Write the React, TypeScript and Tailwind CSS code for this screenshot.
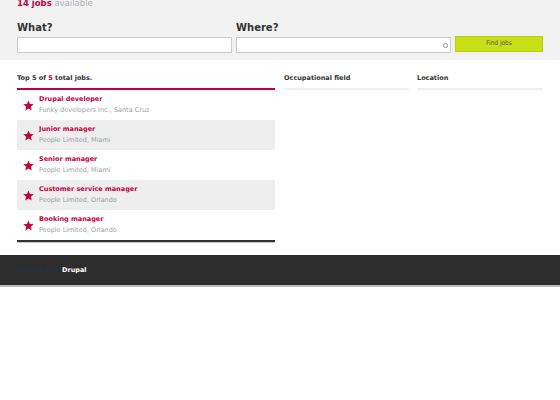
const JOBS = [
  { title: "Drupal developer", meta: "Funky developers Inc., Santa Cruz" },
  { title: "Junior manager", meta: "People Limited, Miami" },
  { title: "Senior manager", meta: "People Limited, Miami" },
  { title: "Customer service manager", meta: "People Limited, Orlando" },
  { title: "Booking manager", meta: "People Limited, Orlando" },
];

function Star() {
  return (
    <svg width="11" height="11" viewBox="0 0 24 24" className="fill-[#c4003c] shrink-0">
      <path d="M12 1l3.2 7.7 8.3.6-6.4 5.4 2 8.1L12 18.4l-7.1 4.4 2-8.1L.5 9.3l8.3-.6z" />
    </svg>
  );
}

export default function App() {
  return (
    <div className="w-[560px] h-[400px] overflow-hidden bg-white font-['DejaVu_Sans',sans-serif]">
      <div className="bg-[#f2f2f2] h-[60px] px-[17px] flex flex-col">
        <div className="-mt-[2px] h-[10px] text-[8.5px] leading-[10px] whitespace-nowrap">
          <span className="font-bold text-[#c4003c]">14 jobs</span>{" "}
          <span className="text-[#aab0b5]">available</span>
        </div>
        <div className="flex gap-[4px] mt-[14px]">
          <div className="w-[215px]">
            <div className="text-[10px] leading-[12px] font-bold text-[#333] mb-[3px]">What?</div>
            <div className="h-[16px] bg-white border border-[#ccc]" />
          </div>
          <div className="w-[215px]">
            <div className="text-[10px] leading-[12px] font-bold text-[#333] mb-[3px]">Where?</div>
            <div className="h-[16px] bg-white border border-[#ccc] flex items-center justify-end pr-[2px]">
              <span className="w-[5px] h-[5px] rounded-full border border-[#999]" />
            </div>
          </div>
          <div className="w-[88px] self-end mb-[1px]">
            <button className="w-full h-[16px] bg-[#c9df17] border border-[#bcd012] text-[6.5px] text-[#555] font-['DejaVu_Sans_Condensed','DejaVu_Sans',sans-serif]">
              Find jobs
            </button>
          </div>
        </div>
      </div>

      <div className="h-[195px] px-[17px] pt-[13px] flex">
        <div className="w-[258px]">
          <div className="text-[6.5px] leading-[10px] font-bold text-[#333] h-[15px]">
            Top 5 of <span className="text-[#c4003c]">5</span> total jobs.
          </div>
          <div className="border-t-2 border-[#c4003c]" />
          {JOBS.map((j, i) => (
            <div
              key={j.title}
              className={`h-[30px] flex items-center gap-[5px] pl-[6px] ${i % 2 === 1 ? "bg-[#eeeeee]" : "bg-white"}`}
            >
              <Star />
              <div className="flex flex-col gap-[2px] self-start pt-[5px]">
                <div className="text-[6.5px] leading-[9px] font-bold text-[#c4003c]">{j.title}</div>
                <div className="text-[6.5px] leading-[9px] text-[#999fa6]">{j.meta}</div>
              </div>
            </div>
          ))}
          <div className="border-t-2 border-[#333]" />
          <div className="border-t border-[#c8c8c8]" />
        </div>
        <div className="w-[125px] ml-[9px]">
          <div className="text-[6.5px] leading-[10px] font-bold text-[#333] h-[15px]">Occupational field</div>
          <div className="border-t-2 border-[#f0f0f0]" />
        </div>
        <div className="w-[126px] ml-[8px]">
          <div className="text-[6.5px] leading-[10px] font-bold text-[#333] h-[15px]">Location</div>
          <div className="border-t-2 border-[#f0f0f0]" />
        </div>
      </div>

      <div className="h-[32px] bg-[#2d2d2d] border-b-2 border-[#bbb] px-[17px] pt-[1px] flex items-center text-[6.5px] font-bold">
        <span className="text-[#283040]">Powered by</span>
        <span className="text-white ml-[2px]">Drupal</span>
      </div>
    </div>
  );
}
